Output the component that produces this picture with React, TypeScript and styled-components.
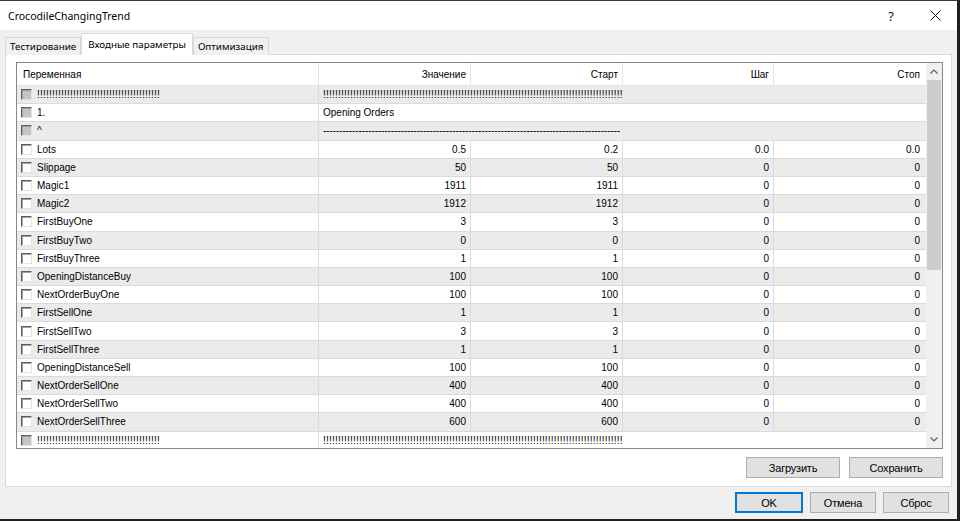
import React from 'react';
import styled, { createGlobalStyle } from 'styled-components';

const GlobalStyle = createGlobalStyle`
  html, body {
    margin: 0;
    padding: 0;
    background: #1f1f1f;
  }
  * {
    box-sizing: border-box;
  }
`;

const Window = styled.div`
  width: 957px;
  height: 519px;
  background: #f0f0f0;
  display: flex;
  flex-direction: column;
  overflow: hidden;
  border-top: 1px solid #3a3a3a;
`;

const TitleBar = styled.div`
  height: 29px;
  background: #fff;
  display: flex;
  align-items: center;
  padding-left: 8px;
  font-family: 'Noto Sans', sans-serif;
  font-size: 10.5px;
  color: #000;
`;

const TitleText = styled.div`
  flex: 1;
`;

const TitleButton = styled.div`
  width: 44px;
  height: 29px;
  display: flex;
  align-items: center;
  justify-content: center;
  font-family: 'Noto Sans', sans-serif;
  font-size: 13px;
  color: #111;
`;

const Body = styled.div`
  flex: 1;
  display: flex;
  flex-direction: column;
  padding: 3px 5px 0 5px;
`;

const TabStrip = styled.div`
  display: flex;
  align-items: flex-end;
  height: 22px;
  margin-bottom: -1px;
  position: relative;
  z-index: 1;
`;

const Tab = styled.div<{ $active?: boolean }>`
  height: ${(p) => (p.$active ? '22px' : '18px')};
  padding: 0 ${(p) => (p.$active ? '6px' : '4px')};
  display: flex;
  align-items: center;
  background: ${(p) => (p.$active ? '#fff' : '#f0f0f0')};
  border: 1px solid #d9d9d9;
  border-bottom: ${(p) => (p.$active ? '1px solid #fff' : 'none')};
  font-family: 'Noto Sans', sans-serif;
  font-size: 9.8px;
  color: #000;
  white-space: nowrap;
`;

const Panel = styled.div`
  height: 433px;
  background: #fff;
  border: 1px solid #d9d9d9;
  padding: 7px 8px 0 10px;
  display: flex;
  flex-direction: column;
`;

const Table = styled.div`
  height: 387px;
  border: 1px solid #828790;
  display: flex;
  font-family: 'Liberation Sans', Arial, sans-serif;
  font-size: 10px;
  color: #000;
`;

const GridArea = styled.div`
  flex: 1;
  overflow: hidden;
`;

const columns = '302px 152px 152px 151px 1fr';

const HeaderRow = styled.div`
  display: grid;
  grid-template-columns: ${columns};
  height: 23px;
  border-bottom: 1px solid #e5e5e5;
`;

const HeaderCell = styled.div<{ $left?: boolean; $last?: boolean }>`
  display: flex;
  align-items: center;
  justify-content: ${(p) => (p.$left ? 'flex-start' : 'flex-end')};
  padding: 0 ${(p) => (p.$last ? '6px' : '4px')} 0 ${(p) => (p.$left ? '6px' : '4px')};
  border-right: ${(p) => (p.$last ? 'none' : '1px solid #e5e5e5')};
`;

const Row = styled.div<{ $alt: boolean }>`
  display: grid;
  grid-template-columns: ${columns};
  height: 18.2px;
  background: ${(p) => (p.$alt ? '#ebebeb' : '#fff')};
  border-bottom: 1px solid #dadada;
`;

const NameCell = styled.div`
  display: flex;
  align-items: center;
  gap: 5px;
  padding-left: 4px;
  border-right: 1px solid #dadada;
  white-space: nowrap;
  overflow: hidden;
`;

const Check = styled.span<{ $disabled?: boolean }>`
  width: 11px;
  height: 11px;
  flex: none;
  border-top: 1px solid #5f5f5f;
  border-left: 1px solid #5f5f5f;
  border-right: 1px solid #e3e3e3;
  border-bottom: 1px solid #e3e3e3;
  box-shadow: inset 1px 1px 0 #a0a0a0;
  background: ${(p) => (p.$disabled ? '#c4c4c4' : '#fff')};
`;

const TextCell = styled.div`
  grid-column: span 2;
  display: flex;
  align-items: center;
  padding-left: 4px;
  white-space: nowrap;
  overflow: hidden;
`;

const NumCell = styled.div<{ $last?: boolean }>`
  display: flex;
  align-items: center;
  justify-content: flex-end;
  padding-right: ${(p) => (p.$last ? '6px' : '4px')};
  border-right: ${(p) => (p.$last ? 'none' : '1px solid #dadada')};
`;

const Bangs = styled.span`
  letter-spacing: 0.22px;
`;

const Dashes = styled.span`
  letter-spacing: -0.1px;
`;

const Scrollbar = styled.div`
  width: 16px;
  background: #f0f0f0;
  display: flex;
  flex-direction: column;
`;

const Arrow = styled.div`
  height: 17px;
  display: flex;
  align-items: center;
  justify-content: center;
`;

const Thumb = styled.div`
  height: 190px;
  margin: 0 1px;
  background: #cdcdcd;
`;

const Spacer = styled.div`
  flex: 1;
`;

const ButtonRow = styled.div<{ $gap: number }>`
  display: flex;
  justify-content: flex-end;
  gap: ${(p) => p.$gap}px;
`;

const PanelButtons = styled(ButtonRow)`
  margin-top: 8px;
`;

const Footer = styled(ButtonRow)`
  padding: 5px 3px 0 0;
`;

const Button = styled.div<{ $width: number; $primary?: boolean }>`
  width: ${(p) => p.$width}px;
  height: 21px;
  display: flex;
  align-items: center;
  justify-content: center;
  background: #e1e1e1;
  border: 1px solid ${(p) => (p.$primary ? '#0078d7' : '#adadad')};
  box-shadow: ${(p) => (p.$primary ? 'inset 0 0 0 1px #0078d7' : 'none')};
  font-family: 'Liberation Sans', Arial, sans-serif;
  font-size: 11px;
  letter-spacing: -0.2px;
  color: #000;
`;

type Param =
  | { kind: 'text'; name: React.ReactNode; value: React.ReactNode }
  | { kind: 'num'; name: string; values: [string, string, string, string] };

const bang = (n: number) => <Bangs>{'!'.repeat(n)}</Bangs>;

const num = (name: string, a: string, b: string, c = '0', d = '0'): Param => ({
  kind: 'num',
  name,
  values: [a, b, c, d],
});

const params: Param[] = [
  { kind: 'text', name: bang(41), value: bang(100) },
  { kind: 'text', name: '1.', value: 'Opening Orders' },
  { kind: 'text', name: '^', value: <Dashes>{'-'.repeat(92)}</Dashes> },
  num('Lots', '0.5', '0.2', '0.0', '0.0'),
  num('Slippage', '50', '50'),
  num('Magic1', '1911', '1911'),
  num('Magic2', '1912', '1912'),
  num('FirstBuyOne', '3', '3'),
  num('FirstBuyTwo', '0', '0'),
  num('FirstBuyThree', '1', '1'),
  num('OpeningDistanceBuy', '100', '100'),
  num('NextOrderBuyOne', '100', '100'),
  num('FirstSellOne', '1', '1'),
  num('FirstSellTwo', '3', '3'),
  num('FirstSellThree', '1', '1'),
  num('OpeningDistanceSell', '100', '100'),
  num('NextOrderSellOne', '400', '400'),
  num('NextOrderSellTwo', '400', '400'),
  num('NextOrderSellThree', '600', '600'),
  { kind: 'text', name: bang(41), value: bang(100) },
];

const Chevron = ({ up }: { up?: boolean }) => (
  <svg width="8" height="5" viewBox="0 0 8 5">
    <path
      d={up ? 'M0.5 4.5 L4 1 L7.5 4.5' : 'M0.5 0.5 L4 4 L7.5 0.5'}
      fill="none"
      stroke="#606060"
      strokeWidth="1.2"
    />
  </svg>
);

const CloseIcon = () => (
  <svg width="11" height="11" viewBox="0 0 11 11">
    <path d="M0.5 0.5 L10.5 10.5 M10.5 0.5 L0.5 10.5" stroke="#111" strokeWidth="1" />
  </svg>
);

const ParamRow = ({ param, index }: { param: Param; index: number }) => {
  const alt = index % 2 === 0;
  if (param.kind === 'text') {
    return (
      <Row $alt={alt}>
        <NameCell>
          <Check $disabled />
          {param.name}
        </NameCell>
        <TextCell>{param.value}</TextCell>
        <div />
        <div />
      </Row>
    );
  }
  return (
    <Row $alt={alt}>
      <NameCell>
        <Check />
        {param.name}
      </NameCell>
      {param.values.map((v, i) => (
        <NumCell key={i} $last={i === 3}>
          {v}
        </NumCell>
      ))}
    </Row>
  );
};

const App = () => {
  return (
    <>
      <GlobalStyle />
      <Window>
        <TitleBar>
          <TitleText>CrocodileChangingTrend</TitleText>
          <TitleButton>?</TitleButton>
          <TitleButton>
            <CloseIcon />
          </TitleButton>
        </TitleBar>
        <Body>
          <TabStrip>
            <Tab>Тестирование</Tab>
            <Tab $active>Входные параметры</Tab>
            <Tab>Оптимизация</Tab>
          </TabStrip>
          <Panel>
            <Table>
              <GridArea>
                <HeaderRow>
                  <HeaderCell $left>Переменная</HeaderCell>
                  <HeaderCell>Значение</HeaderCell>
                  <HeaderCell>Старт</HeaderCell>
                  <HeaderCell>Шаг</HeaderCell>
                  <HeaderCell $last>Стоп</HeaderCell>
                </HeaderRow>
                {params.map((p, i) => (
                  <ParamRow key={i} param={p} index={i} />
                ))}
              </GridArea>
              <Scrollbar>
                <Arrow>
                  <Chevron up />
                </Arrow>
                <Thumb />
                <Spacer />
                <Arrow>
                  <Chevron />
                </Arrow>
              </Scrollbar>
            </Table>
            <PanelButtons $gap={9}>
              <Button $width={94}>Загрузить</Button>
              <Button $width={94}>Сохранить</Button>
            </PanelButtons>
          </Panel>
          <Footer $gap={7}>
            <Button $width={68} $primary>
              OK
            </Button>
            <Button $width={66}>Отмена</Button>
            <Button $width={66}>Сброс</Button>
          </Footer>
        </Body>
      </Window>
    </>
  );
};

export default App;
